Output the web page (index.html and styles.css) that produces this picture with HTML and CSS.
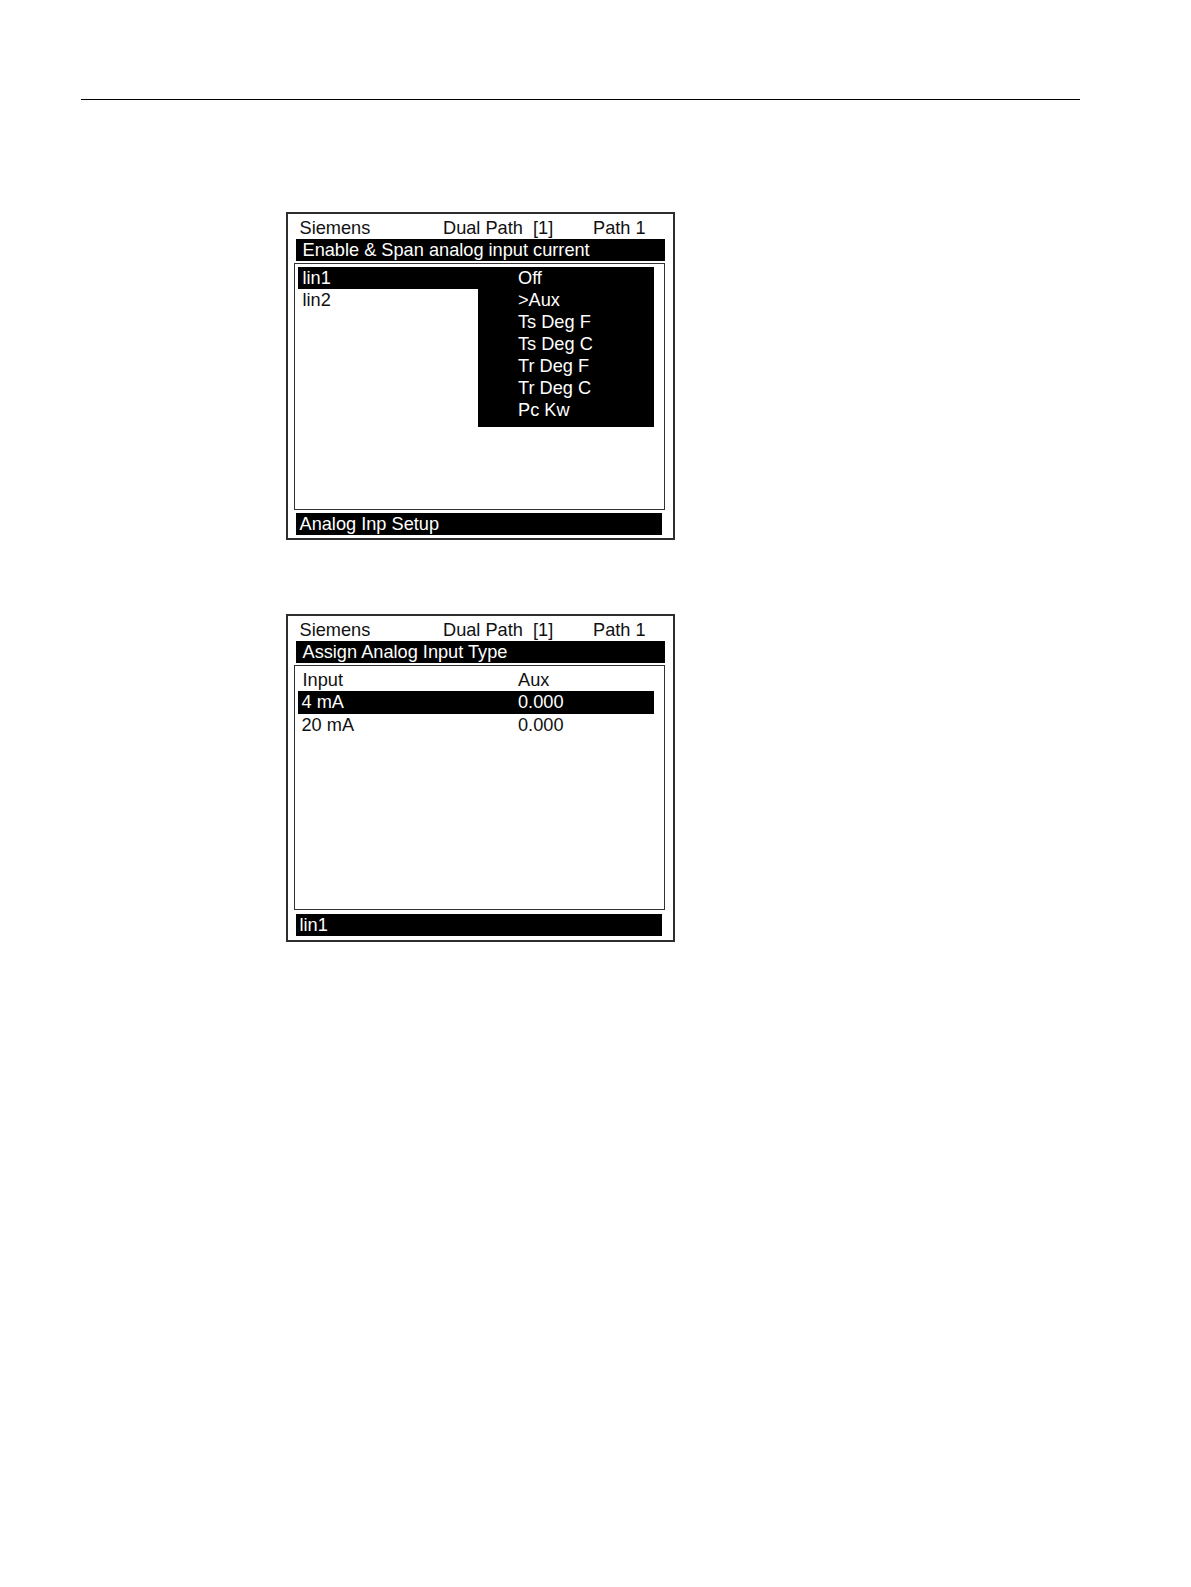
FILE: index.html
```html
<!DOCTYPE html>
<html>
<head>
<meta charset="utf-8">
<link rel="stylesheet" href="styles.css">
</head>
<body>
<div class="page">
  <div class="rule"></div>

  <div class="screen first">
    <div class="hdr"><span>Siemens</span><span>Dual Path&nbsp;&nbsp;[1]</span><span>Path 1</span></div>
    <div class="titlebar">Enable &amp; Span analog input current</div>
    <div class="content">
      <div class="split">
        <div class="list">
          <div class="row sel">lin1</div>
          <div class="row">lin2</div>
        </div>
        <div class="dropdown">
          <div class="ditem">Off</div>
          <div class="ditem">&gt;Aux</div>
          <div class="ditem">Ts Deg F</div>
          <div class="ditem">Ts Deg C</div>
          <div class="ditem">Tr Deg F</div>
          <div class="ditem">Tr Deg C</div>
          <div class="ditem">Pc Kw</div>
        </div>
      </div>
    </div>
    <div class="statusbar">Analog Inp Setup</div>
  </div>

  <div class="screen second">
    <div class="hdr"><span>Siemens</span><span>Dual Path&nbsp;&nbsp;[1]</span><span>Path 1</span></div>
    <div class="titlebar">Assign Analog Input Type</div>
    <div class="content table-content">
      <div class="table">
        <div class="trow head"><span class="c1">Input</span><span class="c2">Aux</span></div>
        <div class="trow sel"><span class="c1 tight">4 mA</span><span class="c2">0.000</span></div>
        <div class="trow"><span class="c1 tight">20 mA</span><span class="c2">0.000</span></div>
      </div>
    </div>
    <div class="statusbar">lin1</div>
  </div>
</div>
</body>
</html>
```

FILE: styles.css
```css
html, body {
  margin: 0;
  padding: 0;
  background: #ffffff;
}

.page {
  width: 1191px;
  height: 1587px;
  padding-top: 99px;
  box-sizing: border-box;
  font-family: "Liberation Sans", Arial, sans-serif;
  font-size: 18.2px;
  color: #111;
}

.rule {
  margin-left: 81px;
  width: 999px;
  height: 1.4px;
  background: #000;
}

.screen {
  margin-left: 286px;
  width: 389px;
  height: 328px;
  box-sizing: border-box;
  border: 2px solid #2e2e2e;
  display: flex;
  flex-direction: column;
}

.screen.first {
  margin-top: 112px;
}

.screen.second {
  margin-top: 74px;
}

.hdr {
  height: 24.5px;
  display: grid;
  grid-template-columns: 143.5px 150px 1fr;
  padding-left: 11.5px;
  padding-top: 2px;
  align-items: center;
  line-height: 22px;
  box-sizing: border-box;
}

.titlebar {
  margin-left: 7.5px;
  width: 369.5px;
  height: 22.3px;
  background: #000;
  color: #fff;
  line-height: 23px;
  padding-left: 7px;
  box-sizing: border-box;
}

.content {
  margin-top: 1.7px;
  margin-left: 5.5px;
  width: 371.5px;
  height: 247px;
  box-sizing: border-box;
  border: 1px solid #333;
  padding: 3px 0 0 3px;
}

.table-content {
  padding-top: 2.5px;
  height: 245px;
}

.split {
  display: flex;
  align-items: flex-start;
}

.list {
  width: 180px;
}

.row {
  height: 22px;
  line-height: 23px;
  padding-left: 5px;
}

.row.sel {
  background: #000;
  color: #fff;
}

.dropdown {
  width: 176px;
  height: 160px;
  background: #000;
  color: #fff;
  padding-left: 40.5px;
  padding-top: 1.5px;
  box-sizing: border-box;
}

.ditem {
  height: 21.9px;
  line-height: 21.9px;
}

.table {
  width: 356px;
}

.trow {
  display: grid;
  grid-template-columns: 220.5px 1fr;
  height: 22.4px;
  line-height: 22.4px;
}

.trow.head {
  line-height: 25px;
}

.trow.sel {
  background: #000;
  color: #fff;
  height: 23px;
  line-height: 23.5px;
}

.c1 {
  padding-left: 5px;
}

.c1.tight {
  padding-left: 4px;
}

.statusbar {
  margin-top: 3px;
  margin-left: 7.5px;
  width: 366.5px;
  height: 22.3px;
  background: #000;
  color: #fff;
  line-height: 22.3px;
  padding-left: 4px;
  box-sizing: border-box;
}

.second .statusbar {
  margin-top: 4px;
}
```
